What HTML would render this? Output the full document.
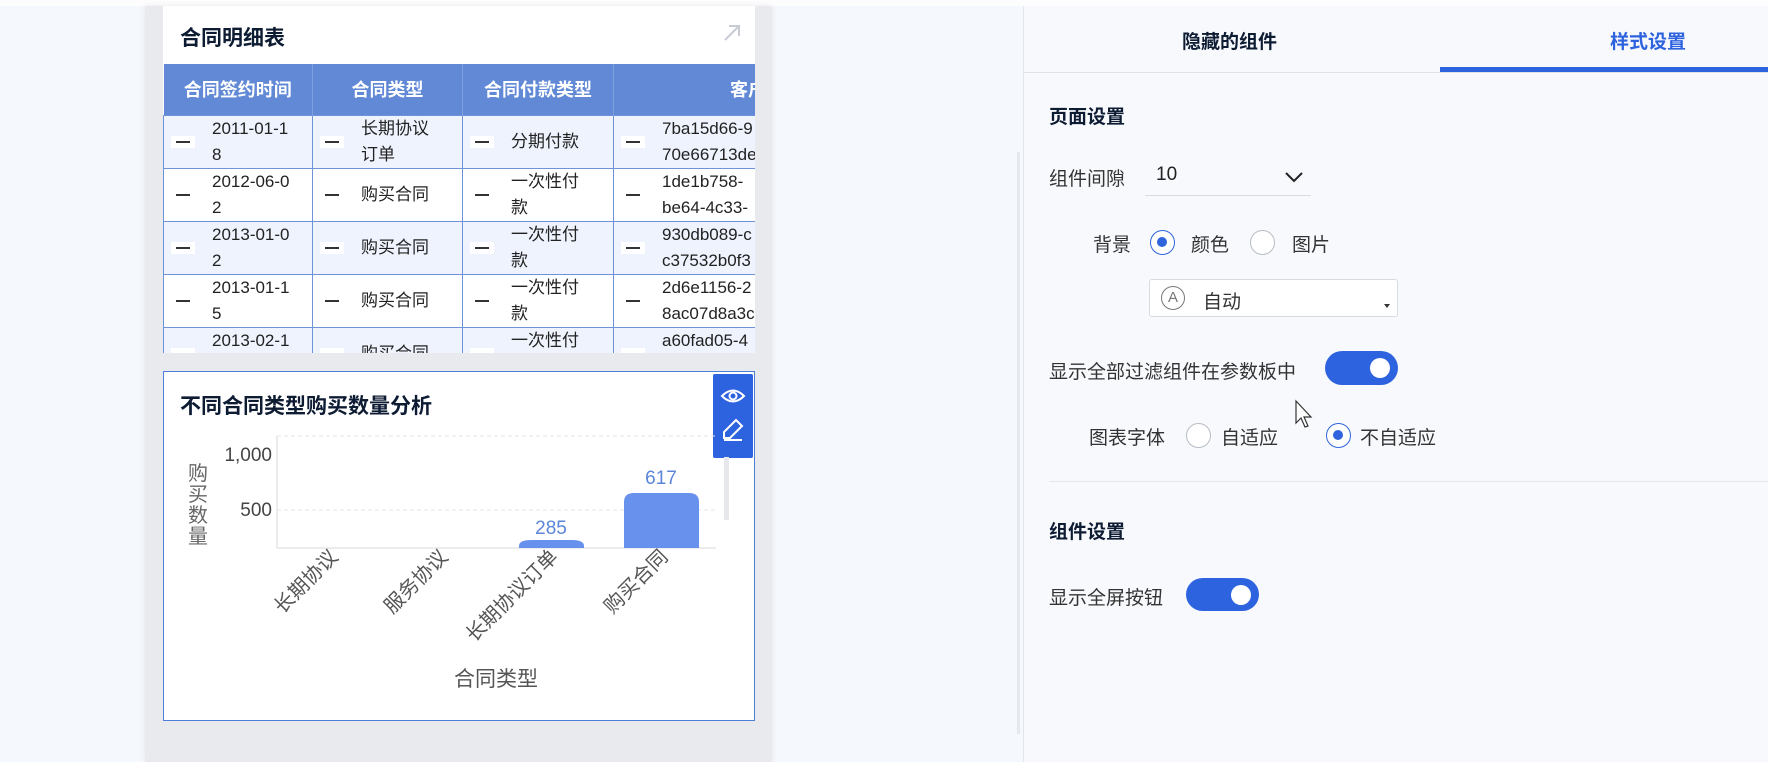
<!DOCTYPE html>
<html><head><meta charset="utf-8"><style>
*{margin:0;padding:0;box-sizing:border-box}
body{width:1768px;height:762px;position:relative;overflow:hidden;background:#f5f8fc;font-family:"Liberation Sans","Noto Sans CJK SC",sans-serif;color:#1f2329}
.a{position:absolute;white-space:nowrap}
.frame{left:145px;top:6px;width:627px;height:756px;background:#e8eaee;box-shadow:0 0 6px rgba(0,0,0,.08)}
.card1{left:163px;top:6px;width:592px;height:347px;background:#fff;overflow:hidden}
table{border-collapse:collapse;position:absolute;left:0;top:58px;table-layout:fixed;width:700px}
th{background:#6189d6;color:#fff;font-size:18px;font-weight:bold;height:51px;border-right:1px solid #7fa0df;text-align:center}
td{height:51px;border:1px solid #6f93d9;font-size:17px;line-height:26px;vertical-align:middle;color:#222;overflow:hidden}
tr.o td{background:#eef3fd}
td .d{display:inline-block;width:14px;height:2px;background:#333;vertical-align:middle;margin:0 22px 0 12px;box-shadow:0 0 0 5px #fff}
td .t{display:inline-block;vertical-align:middle;white-space:nowrap}
.card2{left:163px;top:371px;width:592px;height:350px;background:#fff;border:1px solid #4d7fd8}
.b{font-weight:bold;color:#0d1b33}
.lbl{font-size:19px;color:#333}
.radio{width:25px;height:25px;border-radius:50%;border:1.5px solid #b8bcc4;background:#fff}
.radio.on{border-color:#2f64dc}
.radio.on::after{content:"";position:absolute;left:6px;top:6px;width:10px;height:10px;border-radius:50%;background:#2f64dc}
.tg{background:#2e63df;border-radius:17px}
.tg::after{content:"";position:absolute;right:8px;top:50%;margin-top:-10px;width:20px;height:20px;border-radius:50%;background:#fff}
</style></head><body>
<div class="a" style="left:0;top:0;width:1768px;height:6px;background:#fdfdfe"></div>
<div class="a frame"></div>
<div class="a card1">
  <div class="a b" style="left:17px;top:16px;font-size:21px">合同明细表</div>
  <svg class="a" style="left:558px;top:16px" width="22" height="22"><path d="M4 18L18 4M8 4h10v10" stroke="#c8ccd4" stroke-width="2" fill="none"/></svg>
  <table>
    <colgroup><col style="width:149px"><col style="width:150px"><col style="width:151px"><col style="width:250px"></colgroup>
    <tr><th>合同签约时间</th><th>合同类型</th><th>合同付款类型</th><th style="text-align:left;padding-left:116px">客户</th></tr>
    <tr class="o"><td><span class="d"></span><span class="t">2011-01-1<br>8</span></td><td><span class="d"></span><span class="t">长期协议<br>订单</span></td><td><span class="d"></span><span class="t">分期付款</span></td><td><span class="d"></span><span class="t">7ba15d66-9<br>70e66713de</span></td></tr>
    <tr><td><span class="d"></span><span class="t">2012-06-0<br>2</span></td><td><span class="d"></span><span class="t">购买合同</span></td><td><span class="d"></span><span class="t">一次性付<br>款</span></td><td><span class="d"></span><span class="t">1de1b758-<br>be64-4c33-</span></td></tr>
    <tr class="o"><td><span class="d"></span><span class="t">2013-01-0<br>2</span></td><td><span class="d"></span><span class="t">购买合同</span></td><td><span class="d"></span><span class="t">一次性付<br>款</span></td><td><span class="d"></span><span class="t">930db089-c<br>c37532b0f3</span></td></tr>
    <tr><td><span class="d"></span><span class="t">2013-01-1<br>5</span></td><td><span class="d"></span><span class="t">购买合同</span></td><td><span class="d"></span><span class="t">一次性付<br>款</span></td><td><span class="d"></span><span class="t">2d6e1156-2<br>8ac07d8a3c</span></td></tr>
    <tr class="o"><td><span class="d"></span><span class="t">2013-02-1<br>4</span></td><td><span class="d"></span><span class="t">购买合同</span></td><td><span class="d"></span><span class="t">一次性付<br>款</span></td><td><span class="d"></span><span class="t">a60fad05-4<br>xx</span></td></tr>
  </table>
</div>
<div class="a card2">
  <div class="a b" style="left:16px;top:18px;font-size:21px">不同合同类型购买数量分析</div>
</div>
<div class="a" style="left:713px;top:374px;width:40px;height:84px;background:#2e63df;border-radius:2px"></div>
<svg class="a" style="left:713px;top:374px" width="40" height="84">
  <path d="M9 22q11-11 22 0q-11 11-22 0z" stroke="#fff" stroke-width="2" fill="none"/><circle cx="20" cy="22" r="3.5" stroke="#fff" stroke-width="2" fill="none"/>
  <path d="M11 64l0-6l12-12l6 6l-12 12z M11 66h18" stroke="#fff" stroke-width="2" fill="none"/>
</svg>
<svg class="a" style="left:163px;top:420px" width="592" height="300" font-family="Liberation Sans,Noto Sans CJK SC,sans-serif">
  <line x1="114" y1="16" x2="553" y2="16" stroke="#e4e6ea" stroke-dasharray="4 3"/>
  <line x1="114" y1="90" x2="553" y2="90" stroke="#e4e6ea" stroke-dasharray="4 3"/>
  <line x1="114" y1="16" x2="114" y2="128" stroke="#d5d8de"/>
  <line x1="114" y1="128" x2="553" y2="128" stroke="#d5d8de"/>
  <rect x="561" y="37" width="5" height="63" fill="#e6e8ec"/>
  <text x="109" y="41" font-size="19" fill="#444" text-anchor="end">1,000</text>
  <text x="109" y="96" font-size="19" fill="#444" text-anchor="end">500</text>
  <text font-size="20" fill="#666"><tspan x="25" y="60">购</tspan><tspan x="25" y="81">买</tspan><tspan x="25" y="102">数</tspan><tspan x="25" y="123">量</tspan></text>
  <path d="M356 128v-2q0-6 12-6h41q12 0 12 6v2z" fill="#6891ee"/>
  <path d="M461 128v-46q0-9 10-9h55q10 0 10 9v46z" fill="#6891ee"/>
  <text x="388" y="114" font-size="19" fill="#5b85d8" text-anchor="middle">285</text>
  <text x="498" y="64" font-size="19" fill="#5b85d8" text-anchor="middle">617</text>
  <g font-size="20" fill="#555" text-anchor="end">
    <text transform="translate(176,138) rotate(-45)">长期协议</text>
    <text transform="translate(286,138) rotate(-45)">服务协议</text>
    <text transform="translate(396,138) rotate(-45)">长期协议订单</text>
    <text transform="translate(506,138) rotate(-45)">购买合同</text>
  </g>
  <text x="333" y="266" font-size="21" fill="#555" text-anchor="middle">合同类型</text>
</svg>

<!-- right panel -->
<div class="a" style="left:1023px;top:6px;width:745px;height:756px;background:#f7f9fc;border-left:1px solid #e3e6eb"></div>
<div class="a" style="left:1017px;top:152px;width:3px;height:582px;background:#e6e8ec"></div>
<div class="a" style="left:1024px;top:72px;width:744px;height:1px;background:#dfe2e7"></div>
<div class="a b" style="left:1182px;top:27px;font-size:19px">隐藏的组件</div>
<div class="a" style="left:1610px;top:27px;font-size:19px;font-weight:bold;color:#2e63df">样式设置</div>
<div class="a" style="left:1440px;top:67px;width:328px;height:5px;background:#2e63df"></div>
<div class="a b" style="left:1049px;top:102px;font-size:19px">页面设置</div>
<div class="a lbl" style="left:1049px;top:164px">组件间隙</div>
<div class="a lbl" style="left:1156px;top:164px;color:#222">10</div>
<svg class="a" style="left:1284px;top:170px" width="20" height="14"><path d="M2 3l8 8l8-8" stroke="#222" stroke-width="2" fill="none"/></svg>
<div class="a" style="left:1145px;top:195px;width:166px;height:1px;background:#d8dbe0"></div>
<div class="a lbl" style="left:1093px;top:230px">背景</div>
<div class="a radio on" style="left:1150px;top:230px"></div>
<div class="a lbl" style="left:1191px;top:230px">颜色</div>
<div class="a radio" style="left:1250px;top:230px"></div>
<div class="a lbl" style="left:1292px;top:230px">图片</div>
<div class="a" style="left:1149px;top:279px;width:249px;height:38px;background:#fff;border:1px solid #d8dbe0;border-radius:3px"></div>
<div class="a" style="left:1161px;top:286px;width:24px;height:24px;border:1.5px solid #777;border-radius:50%;font-size:15px;color:#777;text-align:center;line-height:21px">A</div>
<div class="a lbl" style="left:1203px;top:287px">自动</div>
<div class="a" style="left:1384px;top:304px;width:0;height:0;border-left:3px solid transparent;border-right:3px solid transparent;border-top:4px solid #333"></div>
<div class="a lbl" style="left:1049px;top:357px">显示全部过滤组件在参数板中</div>
<div class="a tg" style="left:1325px;top:351px;width:73px;height:34px"></div>
<svg class="a" style="left:1294px;top:399px" width="20" height="30"><path d="M2 2v22l5-5l4 9l3-1l-4-9h7z" fill="#fff" stroke="#333" stroke-width="1.2"/></svg>
<div class="a lbl" style="left:1089px;top:423px">图表字体</div>
<div class="a radio" style="left:1186px;top:423px"></div>
<div class="a lbl" style="left:1221px;top:423px">自适应</div>
<div class="a radio on" style="left:1326px;top:423px"></div>
<div class="a lbl" style="left:1360px;top:423px">不自适应</div>
<div class="a" style="left:1049px;top:481px;width:719px;height:1px;background:#e3e6eb"></div>
<div class="a b" style="left:1049px;top:517px;font-size:19px">组件设置</div>
<div class="a lbl" style="left:1049px;top:583px">显示全屏按钮</div>
<div class="a tg" style="left:1186px;top:578px;width:73px;height:33px"></div>
</body></html>
